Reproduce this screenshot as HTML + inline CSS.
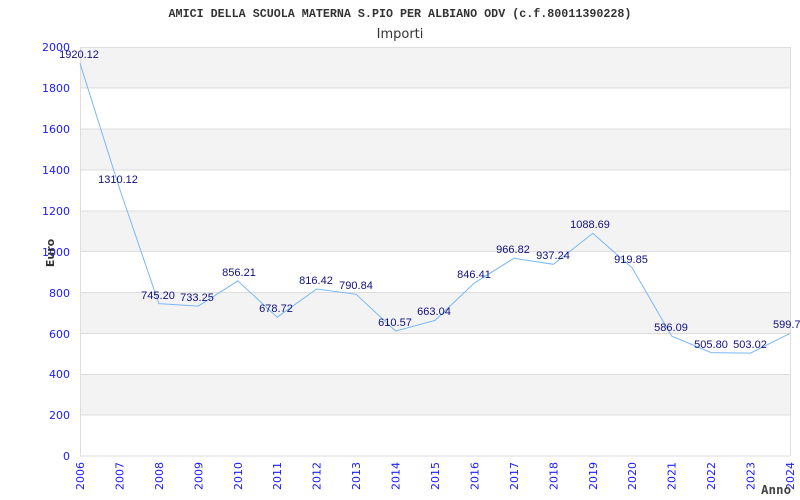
<!DOCTYPE html>
<html><head><meta charset="utf-8"><style>
html,body{margin:0;padding:0;background:#fff;width:800px;height:500px;overflow:hidden}
svg{display:block}
.yl{font-family:"DejaVu Sans",sans-serif;font-size:11px;fill:#1a1aff;text-anchor:end}
.xl{font-family:"DejaVu Sans",sans-serif;font-size:11px;fill:#1a1aff;text-anchor:end}
.vl{font-family:"Liberation Sans",sans-serif;font-size:11px;fill:#101080;text-anchor:middle}
</style></head><body>
<svg width="800" height="500" xmlns="http://www.w3.org/2000/svg">
<text x="400" y="17" text-anchor="middle" font-family="Liberation Mono,monospace" font-size="11.7" font-weight="bold" fill="#333">AMICI DELLA SCUOLA MATERNA S.PIO PER ALBIANO ODV (c.f.80011390228)</text>
<text x="400" y="38" text-anchor="middle" font-family="DejaVu Sans,sans-serif" font-size="13" fill="#333">Importi</text>
<g fill="#f3f3f3">
<rect x="80" y="47" width="710" height="40.9"/>
<rect x="80" y="128.8" width="710" height="40.9"/>
<rect x="80" y="210.6" width="710" height="40.9"/>
<rect x="80" y="292.4" width="710" height="40.9"/>
<rect x="80" y="374.2" width="710" height="40.9"/>
</g>
<g stroke="#dddddd" stroke-width="1">
<line x1="80" x2="790" y1="47.5" y2="47.5"/>
<line x1="80" x2="790" y1="88" y2="88"/>
<line x1="80" x2="790" y1="129" y2="129"/>
<line x1="80" x2="790" y1="170" y2="170"/>
<line x1="80" x2="790" y1="211" y2="211"/>
<line x1="80" x2="790" y1="251.5" y2="251.5"/>
<line x1="80" x2="790" y1="292.5" y2="292.5"/>
<line x1="80" x2="790" y1="333.5" y2="333.5"/>
<line x1="80" x2="790" y1="374.5" y2="374.5"/>
<line x1="80" x2="790" y1="415" y2="415"/>
<line x1="80" x2="790" y1="456" y2="456"/>
<line x1="80.5" x2="80.5" y1="47" y2="456"/>
<line x1="790.5" x2="790.5" y1="47" y2="456"/>
</g>
<g class="yl">
<text x="70" y="51">2000</text><text x="70" y="92">1800</text><text x="70" y="133">1600</text>
<text x="70" y="174">1400</text><text x="70" y="215">1200</text><text x="70" y="256">1000</text>
<text x="70" y="297">800</text><text x="70" y="338">600</text><text x="70" y="378">400</text>
<text x="70" y="419">200</text><text x="70" y="460">0</text>
</g>
<text transform="translate(54,253) rotate(-90)" text-anchor="middle" font-family="DejaVu Sans,sans-serif" font-size="11" font-weight="bold" fill="#333">Euro</text>
<polyline fill="none" stroke="#7ab8f5" stroke-width="1" points="80,63.3 119.4,188.1 158.9,303.6 198.3,306.1 237.8,280.9 277.2,317.2 316.7,289 356.1,294.3 395.6,331.1 435,320.4 474.4,282.9 513.9,258.3 553.3,264.3 592.8,233.4 632.2,267.9 671.7,336.1 711.1,352.6 750.6,353.1 790,333.4"/>
<g class="vl">
<text x="79" y="58">1920.12</text><text x="118" y="183">1310.12</text><text x="158" y="299">745.20</text>
<text x="197" y="301">733.25</text><text x="239" y="276">856.21</text><text x="276" y="312">678.72</text>
<text x="316" y="284">816.42</text><text x="356" y="289">790.84</text><text x="395" y="326">610.57</text>
<text x="434" y="315">663.04</text><text x="474" y="278">846.41</text><text x="513" y="253">966.82</text>
<text x="553" y="259">937.24</text><text x="590" y="228">1088.69</text><text x="631" y="263">919.85</text>
<text x="671" y="331">586.09</text><text x="711" y="348">505.80</text><text x="750" y="348">503.02</text>
<text x="773" y="328" text-anchor="start">599.7</text>
</g>
<g class="xl">
<text transform="translate(84,462) rotate(-90)">2006</text>
<text transform="translate(123.4,462) rotate(-90)">2007</text>
<text transform="translate(162.9,462) rotate(-90)">2008</text>
<text transform="translate(202.3,462) rotate(-90)">2009</text>
<text transform="translate(241.8,462) rotate(-90)">2010</text>
<text transform="translate(281.2,462) rotate(-90)">2011</text>
<text transform="translate(320.7,462) rotate(-90)">2012</text>
<text transform="translate(360.1,462) rotate(-90)">2013</text>
<text transform="translate(399.6,462) rotate(-90)">2014</text>
<text transform="translate(439,462) rotate(-90)">2015</text>
<text transform="translate(478.4,462) rotate(-90)">2016</text>
<text transform="translate(517.9,462) rotate(-90)">2017</text>
<text transform="translate(557.3,462) rotate(-90)">2018</text>
<text transform="translate(596.8,462) rotate(-90)">2019</text>
<text transform="translate(636.2,462) rotate(-90)">2020</text>
<text transform="translate(675.7,462) rotate(-90)">2021</text>
<text transform="translate(715.1,462) rotate(-90)">2022</text>
<text transform="translate(754.6,462) rotate(-90)">2023</text>
<text transform="translate(794,462) rotate(-90)">2024</text>
</g>
<text x="761" y="494" font-family="DejaVu Sans Mono,monospace" font-size="12.5" font-weight="bold" fill="#444">Anno</text>
</svg>
</body></html>
